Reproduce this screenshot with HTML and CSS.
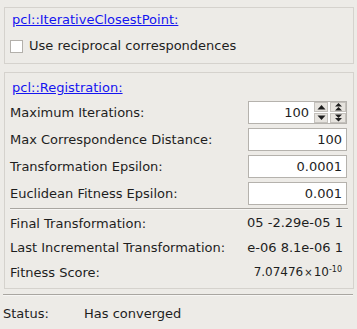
FILE: index.html
```html
<!DOCTYPE html>
<html>
<head>
<meta charset="utf-8">
<link rel="stylesheet" href="styles.css">
</head>
<body>
<div class="group g1">
  <a class="link" href="#">pcl::IterativeClosestPoint:</a>
  <label class="check"><span class="box"></span><span>Use reciprocal correspondences</span></label>
</div>
<div class="group g2">
  <a class="link" href="#">pcl::Registration:</a>
  <div class="rows">
    <div class="row"><span class="lbl">Maximum Iterations:</span>
      <div class="field spin"><span class="val">100</span>
        <span class="btns">
          <span class="btn"><svg width="9" height="6" viewBox="0 0 9 6"><path d="M0.5 5.5 L4.5 1 L8.5 5.5 Z" fill="#1e1e1e"/></svg></span>
          <span class="btn"><svg width="9" height="6" viewBox="0 0 9 6"><path d="M0.5 0.5 L4.5 5 L8.5 0.5 Z" fill="#1e1e1e"/></svg></span>
        </span>
        <span class="btns wide">
          <span class="btn"><svg width="9" height="8" viewBox="0 0 9 8"><path d="M1 3.5 L4.5 0 L8 3.5 Z M1 7.5 L4.5 4 L8 7.5 Z" fill="#1e1e1e"/></svg></span>
          <span class="btn"><svg width="9" height="8" viewBox="0 0 9 8"><path d="M1 0.5 L4.5 4 L8 0.5 Z M1 4 L4.5 7.5 L8 4 Z" fill="#1e1e1e"/></svg></span>
        </span>
      </div>
    </div>
    <div class="row"><span class="lbl">Max Correspondence Distance:</span><div class="field"><span class="val">100</span></div></div>
    <div class="row"><span class="lbl">Transformation Epsilon:</span><div class="field"><span class="val">0.0001</span></div></div>
    <div class="row"><span class="lbl">Euclidean Fitness Epsilon:</span><div class="field"><span class="val">0.001</span></div></div>
  </div>
  <div class="sep"></div>
  <div class="results">
    <div class="rrow"><span class="lbl">Final Transformation:</span><div class="out"><span>05 -2.29e-05 1</span></div></div>
    <div class="rrow"><span class="lbl">Last Incremental Transformation:</span><div class="out"><span>e-06 8.1e-06 1</span></div></div>
    <div class="rrow"><span class="lbl">Fitness Score:</span><div class="out score"><span>7.07476<span class="times">×</span>10<sup>-10</sup></span></div></div>
  </div>
</div>
<div class="hsep"></div>
<div class="status"><span class="slbl">Status:</span><span>Has converged</span></div>
</body>
</html>
```
FILE: styles.css
```css
html, body {
  margin: 0;
  padding: 0;
  background: #edebe7;
}
body {
  font-family: "DejaVu Sans", sans-serif;
  font-size: 13px;
  line-height: 16px;
  color: #1e1e1e;
  width: 357px;
  height: 329px;
  overflow: hidden;
}
.group {
  margin: 0 3px 0 4px;
  border: 1px solid #d5d2cd;
  box-sizing: border-box;
}
.g1 {
  margin-top: 7px;
  height: 57px;
  padding: 4px 0 0 7px;
}
.g2 {
  margin-top: 8px;
  height: 217px;
  padding: 7px 0 0 0;
}
.link {
  color: #1515f0;
  text-decoration: underline;
  display: block;
}
.g2 .link { padding-left: 7px; }
.check {
  display: flex;
  align-items: center;
  gap: 6px;
  margin-top: 10px;
  margin-left: -2px;
}
.box {
  width: 11px;
  height: 11px;
  background: #fff;
  border: 1px solid #b3b0ab;
}
.rows {
  margin-top: 4px;
  display: flex;
  flex-direction: column;
}
.row {
  height: 27px;
  display: flex;
  align-items: flex-start;
  justify-content: space-between;
  padding: 0 6px 0 5px;
}
.lbl {
  line-height: 25px;
}
.field {
  margin-top: 1px;
  width: 99px;
  height: 23px;
  box-sizing: border-box;
  background: #fff;
  border: 1px solid #b5b2ad;
  display: flex;
  align-items: center;
  justify-content: flex-end;
  padding-right: 4px;
}
.spin {
  padding-right: 0;
}
.spin .val {
  margin-right: 5px;
}
.btns {
  display: flex;
  flex-direction: column;
  gap: 1px;
  width: 14px;
  height: 21px;
  margin-right: 2px;
}
.btns.wide {
  width: 16px;
  margin-right: 0;
}
.btn {
  flex: 1;
  background: #e6e3de;
  border: 1px solid #c4c1bc;
  box-sizing: border-box;
  display: flex;
  align-items: center;
  justify-content: center;
}
.sep {
  margin: 0 5px 0 5px;
  height: 1px;
  background: #a9a6a1;
  border-bottom: 1px solid #f7f6f4;
}
.results {
  display: flex;
  flex-direction: column;
  margin-top: 1px;
}
.rrow {
  height: 24.5px;
  display: flex;
  align-items: center;
  justify-content: space-between;
  padding: 0 10px 0 5px;
}
.out {
  width: 96px;
  display: flex;
  justify-content: flex-end;
  white-space: nowrap;
}
.score {
  font-size: 12px;
  padding-right: 1px;
}
.times {
  font-size: 10px;
  padding: 0 1px;
}
sup {
  font-size: 8px;
  line-height: 0;
  vertical-align: 4px;
}
.hsep {
  margin: 5px 4px 0 3px;
  height: 1px;
  background: #a9a6a1;
  border-bottom: 1px solid #f7f6f4;
}
.status {
  display: flex;
  padding: 10px 0 0 3px;
}
.slbl {
  width: 81px;
}
```
